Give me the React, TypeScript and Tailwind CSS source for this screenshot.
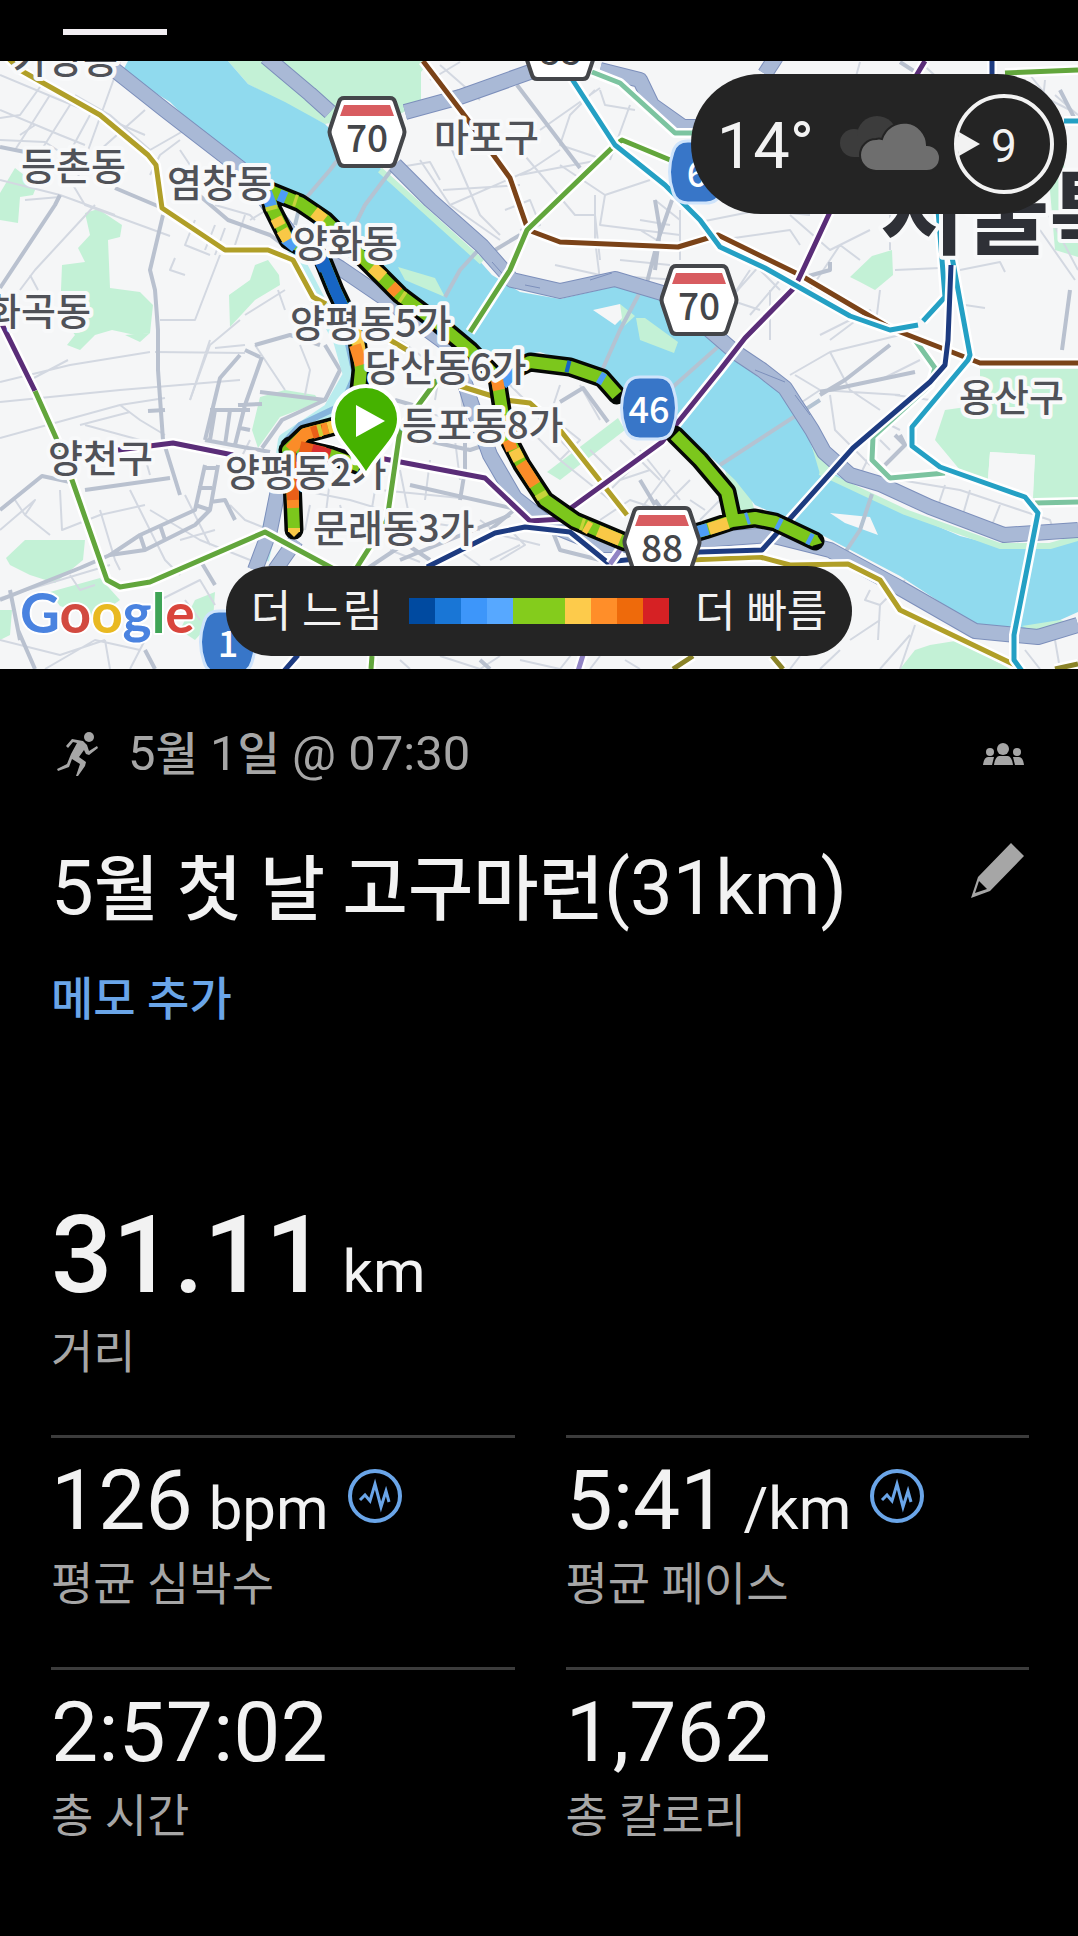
import * as React from "react";

interface MetricProps {
  value: string;
  unit?: string;
  label: string;
  hasChart?: boolean;
}

interface PlaceLabel {
  name: string;
  x: number;
  y: number;
}

interface Stroke {
  color: string;
  d: string;
}

const PLACES: PlaceLabel[] = [
  { name: "가양동", x: 13, y: 73 },
  { name: "등촌동", x: 21, y: 180 },
  { name: "염창동", x: 167, y: 197 },
  { name: "양화동", x: 293, y: 257 },
  { name: "양평동5가", x: 290, y: 337 },
  { name: "당산동6가", x: 365, y: 381 },
  { name: "등포동8가", x: 402, y: 439 },
  { name: "양평동2가", x: 225, y: 486 },
  { name: "문래동3가", x: 313, y: 542 },
  { name: "양천구", x: 48, y: 472 },
  { name: "화곡동", x: -14, y: 325 },
  { name: "마포구", x: 434, y: 151 },
  { name: "용산구", x: 959, y: 411 },
];

const PARKS = [
  "M228 61H430L421 72V103L400 114L380 118L335 122L325 124L285 104L248 84Z",
  "M85 213L98 209L122 225L120 237L108 240L110 288L140 292L153 305L150 333L135 335L112 330L95 335L80 350L67 345L75 335L60 315L62 265L85 262L78 248L90 235Z",
  "M0 193L15 168L37 185L33 195L20 197L18 223L0 220Z",
  "M268 260L279 275L280 285L255 300L230 327L229 295L250 280L255 265Z",
  "M6 558L25 540L85 540L83 560L55 583L30 575L10 565Z",
  "M50 592L100 578L120 600L95 618L60 606Z",
  "M0 610L12 610L10 635L0 640Z",
  "M195 600L215 592L213 620L195 640L180 630Z",
  "M260 397L285 390L315 395L320 402L280 417L258 448L252 430Z",
  "M125 335L150 333L140 342Z",
  "M980 369H1078V498H1033L1035 455L990 452L988 480L960 470L935 440L945 410L980 405Z",
  "M915 650L930 645L955 641L985 655L1010 669H900Z",
  "M850 277L872 256L892 250L893 275L875 290L860 282Z",
  "M1050 190L1063 155L1068 200L1078 232V257L1055 250Z",
  "M547 472L618 418L625 430L560 480Z",
  "M725 470L745 475L755 512L735 515Z",
];

const ISLANDS = [
  "M636 318L645 318L678 342L674 353L640 340Z",
  "M398 267L435 278L445 297L405 280Z",
  "M620 304L635 316L624 326L618 316Z",
  "M810 440L822 456L836 478L820 474Z",
  "M1022 626L1060 620L1078 624L1040 634Z",
];

const EXPRESSWAYS = [
  "M112 68L165 110L240 168L262 196L298 244L340 268L390 302L455 350L470 400L490 455L515 498L548 524L600 545L640 545L700 540L770 535L830 550L900 588L975 631L1038 637L1078 625",
  "M266 57L310 94L330 112M395 165L430 200L482 246L512 280L560 291L615 279L662 293L692 315L735 352L762 370L785 388L812 430L824 452L850 475L880 484L930 507L1004 535L1078 530",
  "M405 112L460 97L530 72M600 70L640 80L652 105L683 127L700 127",
  "M765 74L776 57",
  "M278 490L270 530L255 570M296 540L275 570",
];

const THIN_ROADS = [
  "M0 75L60 100L110 120L145 135M45 80L20 115L0 118M0 110L60 135L85 145M50 95L15 150M70 105L35 160M90 115L60 170M0 140L45 142L80 165",
  "M75 95L110 115L150 150L185 130M120 62L90 145L75 185M145 110L100 150M20 135L35 125M95 205L35 270L20 290M30 275L38 290M60 197L25 200",
  "M0 180L60 195L115 215M70 180L85 205L170 236M195 220L185 245L210 255M175 258L170 270L185 275M215 225L205 250M225 228L215 255M220 255L195 320L160 320M245 315L285 290M278 290L285 310M180 140L160 155L150 175",
  "M0 382L70 365L150 352M0 402L120 390L240 380M0 438L120 405L165 398M30 380L68 360M80 425L130 412M120 405L140 420L165 435M155 352L245 353M210 340L190 400",
  "M240 320L210 345L190 400M255 345L285 390M300 345L310 370L305 395M245 345L215 348M60 490L62 530L100 515L145 505M85 425L140 440L150 475",
  "M100 510L115 560L120 570M130 490L165 560L180 575M0 530L35 500L25 515L50 535M15 500L25 515M0 598L60 580L110 565M70 575L80 590L95 585M150 510L200 540L250 560M185 495L210 545",
  "M0 640L60 655L105 640M105 640L110 669M45 669L95 640L140 650M160 600L200 580L215 605M185 600L200 620M130 669L145 640M180 540L215 530M230 505L245 520L270 530",
  "M300 490L350 500L400 515M310 505L305 530M330 480L325 520M340 505L350 540M375 490L370 520M400 470L410 520L480 530M430 460L425 500M455 440L460 480M380 490L480 500",
  "M400 340L440 370L470 380M440 370L435 400M460 380L465 440M410 410L460 420M480 520L500 535L540 545M520 545L490 560M510 530L525 545L500 560M390 550L420 562M455 548L480 566",
  "M505 380L525 400L540 420M530 400L580 440L560 460M560 385L545 430M580 385L600 420M520 420L560 460L610 500M560 440L590 470M590 450L620 480L650 470M620 440L660 480M650 450L610 490M670 470L640 510M690 480L660 510M640 450L680 500M600 520L630 500L690 520",
  "M400 167L430 162L440 180M420 160L450 205L500 240M443 190L520 185M450 205L530 170L560 150M450 145L480 215L500 235M520 150L575 215L595 215M560 165L605 195L650 180M520 175L600 160M595 215L600 260M595 195V240L600 280M505 210L530 200L540 225L520 230M600 90L605 105L635 110M595 90L570 115L560 145L605 160M630 105L610 160M540 130L600 88",
  "M605 195L600 225L680 235M640 220L670 225M640 230L665 245M655 200L680 220M600 275L680 280M555 265L600 275M620 260L670 265M680 210V260M400 115L390 125M440 65L480 100M460 62L430 80",
  "M700 222L760 210L810 215M720 240L790 230L800 245M740 250L780 290M750 270L730 300L760 310M760 265L720 310M780 280L750 315M770 290L770 340M790 215L830 250L870 230M840 245L810 290M840 245L860 260M890 250V215M895 270L940 268M880 290L875 330M820 335L850 320M830 340L870 310L880 330",
  "M860 75L840 90M860 62L855 80M920 62L940 80L960 78M1030 75L1050 100L1070 110M1045 80L1040 130M960 270L1000 262L1005 272M965 305L985 308M945 320L950 270M1055 95L1078 115M1040 230L1075 280M1030 180L1078 270",
  "M790 375L830 352L900 335M795 375L820 390L900 395M830 352L850 390L880 410M830 395L835 430L870 465M820 390L790 410M880 380L920 360M895 395L930 400M880 420L900 430M870 430L860 440M860 475L870 455M890 450L880 440M900 480L960 490L1050 520L1055 535M920 495L915 505M945 485L935 515M970 490L960 525M1000 505L990 530",
  "M870 590L865 600L880 605L878 640M880 605L905 580M915 625L900 669M910 635L880 669M840 650L820 669M850 640L880 620M1055 640L1060 669M1025 650L1040 669M800 656L790 669M400 660L410 669M440 656L480 669L500 656M520 660L560 669L575 650M625 660L640 669M600 656L590 669",
  "M700 520L720 500M705 510L690 500M700 390L690 410M250 440L240 460L245 480",
  "M215 205L250 215L255 220M245 215L235 245M180 150L190 165M250 220L300 190",
];

const THICK_ROADS = [
  "M0 147L30 153M115 188L160 207M200 196L228 220L270 235L290 250M60 195L55 205L0 288M163 215L150 270L155 290L158 330V370L163 440L180 495",
  "M0 510L42 476L70 482M85 490L170 478M200 560L215 585M148 411L165 410M18 630L35 669M145 650L155 669M10 590L20 640",
  "M240 355L220 378L205 440M255 345L290 335L320 345M262 357L245 405L235 445M210 410H250M205 440L270 452M215 410L210 440M230 410L225 445M260 392L325 400M260 357L245 350M238 405L262 404M240 428L250 430M325 345L340 370L325 400L282 420L262 448",
  "M205 465L195 510L140 535L110 555L145 550L195 525L210 510L218 465M205 468H218M198 488H212M195 505L210 510M140 535L145 550M160 525L165 540M210 502L225 500L235 520",
  "M370 415L400 435L470 450L500 440M410 485L520 510M400 560L510 515M400 540L430 560M465 400V470L460 500M395 460L390 490M395 400L430 410M365 570L410 540",
  "M517 85L580 168M655 500L670 520M490 530L520 505M550 525L560 550L620 565M560 402L583 388L608 422M655 505L640 480",
  "M672 200L658 240L645 290M655 270L660 230L655 200M495 250L520 235M890 345L845 380L820 395M820 392L915 372M900 435L905 445L885 465M905 445L895 435M1070 290L1062 350M1060 90L1078 125M805 277L830 270V262M900 62L920 75",
  "M110 555L80 568L0 600M480 660L490 669",
];

const BRIDGES = [
  "M360 130L330 170L300 205L295 225",
  "M395 165L365 205L350 235",
  "M482 246L460 270L445 297",
  "M640 292L620 330L600 375",
  "M720 345L675 385L650 410M720 465L820 400",
  "M872 494L860 530L840 560L838 555",
];

const TRANSIT: Stroke[] = [
  { color: "#7cc4a0", d: "M592 72L620 83L675 133H695M915 340L935 368L930 385L873 437L872 460L890 478L945 473M1035 503L1078 502" },
  { color: "#b09f28", d: "M0 50L20 70L100 115L148 155L156 165L162 208L225 250H268L293 260L313 297L326 304M390 340L407 350M460 386L505 400L530 403L560 430L627 515M690 560L760 557L790 565L848 564L880 580L900 610L1015 665" },
  { color: "#8a8328", d: "M673 669L693 656M772 656L783 669M1055 669L1078 664" },
  { color: "#7b4318", d: "M423 61L468 120L510 178L528 230L560 242L678 247L718 235L800 275L890 328L980 363H1078" },
  { color: "#5a2d78", d: "M0 320L35 391M118 450L173 443L233 455M310 444L345 452L390 460L485 478L530 521L562 519L571 508L662 442L720 370L745 338L795 287L830 212M916 76L925 61" },
  { color: "#62a63c", d: "M35 391L57 440L72 480L107 580L120 587L150 582L265 532L345 575M352 575L387 520L400 430L437 380M470 332L510 270L527 230L615 145L622 140L675 162M371 669L372 656M1005 73L1078 70" },
  { color: "#24a0c4", d: "M570 76L615 145L665 185L700 220L720 247L765 268L850 316L890 330L918 325M923 321L945 297L938 210M952 257L970 355L968 360L912 427V446L940 467L1025 497L1038 513L1014 635V660L1022 671M1064 121H1078" },
  { color: "#1d3b80", d: "M992 61V76M951 265L948 340L945 365L930 382L853 448L762 550L700 552L607 562L570 532L525 527L495 533L467 547L427 567M284 671L298 655" },
  { color: "#9184c4", d: "M578 671L583 655M610 564L620 550" },
];

const ROUTE =
  "M268 190L300 203L325 220L350 245L380 275L400 295L440 325L470 350L497 378L502 410L510 442L522 465L545 500L575 521L625 542L665 542L705 530L732 521L755 518L775 522L815 541M497 378L530 362L570 367L602 378L617 395M675 435L700 460L727 492L733 520M268 190L272 208L288 240L322 258L335 290L347 315L357 340L361 370L358 400M335 426L305 434L288 450L292 480L294 530M290 446L330 455L360 466";

const PACE_SEGMENTS: Stroke[] = [
  { color: "#4d9df5", d: "M266 192L272 208M279 195L286 198M285 238L296 247M502 384L520 366M694 533L708 529M746 519L749 518M777 523L781 525M808 538L812 540M599 377L604 380" },
  { color: "#1765c4", d: "M322 258L335 290L345 312M566 366L570 367M318 257L325 270" },
  { color: "#f9c846", d: "M314 212L324 220M276 218L280 226M282 230L288 240M372 267L383 277M353 325L357 335L361 358M503 416L508 436M514 450L519 460M585 526L590 529M598 531L620 540M709 529L728 523M294 528L294 532M335 426L328 428" },
  { color: "#fb8c28", d: "M391 286L398 293M355 345L361 365M497 380L499 390M521 463L535 485M328 428L305 434L290 450M292 462L293 508M508 440L512 450" },
  { color: "#ea5f18", d: "M318 431L312 433M290 452L292 480L293 500M300 447L325 453M322 431L319 431" },
  { color: "#d83030", d: "M312 450L330 455" },
  { color: "#c7d33a", d: "M294 200L297 201M401 296L404 298M271 206L272 210M318 431L322 430M540 493L543 498M581 524L584 525" },
];

const PACE_COLORS = [
  "bg-[#004aa0]",
  "bg-[#1976d6]",
  "bg-[#3d96fa]",
  "bg-[#57a8ff]",
  "bg-[#84cc1c]",
  "bg-[#84cc1c]",
  "bg-[#fdcb4b]",
  "bg-[#ff8e29]",
  "bg-[#ee6a0b]",
  "bg-[#d62124]",
];

const HighwayShield: React.FC<{ x: number; y: number; text: string }> = ({ x, y, text }) => (
  <g transform={`translate(${x} ${y})`}>
    <path
      d="M-23 -34H23Q27 -34 28 -30L37 -3Q38 0 37 3L28 30Q27 34 23 34H-23Q-27 34 -28 30L-37 3Q-38 0 -37 -3L-28 -30Q-27 -34 -23 -34Z"
      fill="#fff"
      stroke="#44464a"
      strokeWidth="4"
    />
    <path d="M-23 -27H23L27 -16H-27Z" fill="#d85c60" />
    <text y="20" textAnchor="middle" fontSize="37" fontWeight="500" fill="#44464a">
      {text}
    </text>
  </g>
);

const RouteBadge: React.FC<{ x: number; y: number; text: string }> = ({ x, y, text }) => (
  <g transform={`translate(${x} ${y})`}>
    <path
      d="M-9 -31H9Q21 -31 24 -20Q31 0 24 20Q21 31 9 31H-9Q-21 31 -24 20Q-31 0 -24 -20Q-21 -31 -9 -31Z"
      fill="#3876c8"
      stroke="#cfe4fb"
      strokeWidth="3"
    />
    <text y="15" textAnchor="middle" fontSize="36" fontWeight="500" fill="#fff">
      {text}
    </text>
  </g>
);

const RouteMap: React.FC = () => (
  <svg
    viewBox="0 61 1078 608"
    className="block w-full font-['Noto_Sans_CJK_KR',sans-serif]"
    role="img"
    aria-label="Google"
    fill="none"
    strokeLinejoin="round"
  >
    <rect y="61" width="1078" height="608" fill="#f5f6f7" />
    {PARKS.map((d) => (
      <path key={d} d={d} fill="#c3f1d6" />
    ))}
    <path d="M990 452L1035 455L1033 492L1010 490L988 478Z" fill="#f5f6f7" />
    {THIN_ROADS.map((d) => (
      <path key={d} d={d} stroke="#d3d8e1" strokeWidth="2" />
    ))}
    {THICK_ROADS.map((d) => (
      <path key={d} d={d} stroke="#b9c1cf" strokeWidth="4" />
    ))}

    {/* Han river and its side stream */}
    <path
      d="M128 61H228L248 84L285 102L325 124L350 150L380 168L470 250L492 275L520 292L560 299L617 286L660 300L690 322L735 360L757 376L783 395L806 432L818 462L850 484L900 510L960 536L1004 547L1045 547L1078 540V612L1040 629L975 625L900 576L820 534L755 505L735 480L680 428L617 388L590 370L540 352L505 358L480 350L400 286L330 225L270 183L220 152L170 102L122 72Z"
      fill="#90daee"
    />
    <path d="M380 170L482 262M820 472L905 512L1000 546L1050 546L1078 538" stroke="#c3f1d6" strokeWidth="6" />
    <path d="M292 250L318 300L340 340L350 375L330 410L285 440L278 490L262 560" stroke="#b9ecee" strokeWidth="14" />
    <path d="M346 335L355 375L342 405L300 425L282 445" stroke="#85b4dc" strokeWidth="6" />
    {ISLANDS.map((d) => (
      <path key={d} d={d} fill="#c3f1d6" />
    ))}
    <path d="M593 310L620 304L622 318L615 325ZM830 513L870 517L878 535L845 523Z" fill="#f5f6f7" />
    {BRIDGES.map((d) => (
      <path key={d} d={d} stroke="#b4c3d2" strokeWidth="4" />
    ))}
    {EXPRESSWAYS.map((d) => (
      <React.Fragment key={d}>
        <path d={d} stroke="#7c8fbb" strokeWidth="16" />
        <path d={d} stroke="#a9b9d6" strokeWidth="14" />
      </React.Fragment>
    ))}
    <path d="M590 280L612 273M492 262L508 280M755 370L785 382M795 395L810 415M540 288L525 285" stroke="#7c8fbb" strokeWidth="1" />

    {TRANSIT.map(({ color, d }) => (
      <React.Fragment key={d}>
        <path d={d} stroke="#fff" strokeWidth="10" />
        <path d={d} stroke={color} strokeWidth="5" />
      </React.Fragment>
    ))}

    {/* activity track, coloured by pace */}
    <path d={ROUTE} stroke="#050805" strokeWidth="19" strokeLinecap="round" />
    <path d={ROUTE} stroke="#7cc71c" strokeWidth="12" />
    {PACE_SEGMENTS.map(({ color, d }) => (
      <path key={color} d={d} stroke={color} strokeWidth="12" />
    ))}
    <path d="M288 531H300L294 537Z" fill="#f9c846" />
    <path d="M812 546L817 535L822 543Z" fill="#7cc71c" />

    <HighwayShield x={367} y={132} text="70" />
    <HighwayShield x={699} y={300} text="70" />
    <HighwayShield x={662} y={542} text="88" />
    <HighwayShield x={560} y={45} text="88" />
    <RouteBadge x={649} y={408} text="46" />
    <RouteBadge x={697} y={172} text="6" />
    <RouteBadge x={228} y={642} text="1" />

    <g fill="#505258" stroke="#f8f9fa" strokeWidth="8" paintOrder="stroke" fontSize="38" fontWeight="500">
      {PLACES.map(({ name, x, y }) => (
        <text key={name} x={x} y={y}>
          {name}
        </text>
      ))}
      <text x="880" y="247" fontSize="92" fontWeight="700" fill="#2e3036">
        서울특별시
      </text>
    </g>

    <path
      d="M366 475C352 450 333 440 333 419A33 33 0 0 1 399 419C399 440 380 450 366 475Z"
      fill="#45b200"
      stroke="#fff"
      strokeWidth="4"
    />
    <path d="M356 405V437L385 421Z" fill="#fff" />

    <text
      x="20"
      y="633"
      fontSize="55"
      fontWeight="700"
      stroke="#fff"
      strokeWidth="4"
      paintOrder="stroke"
      className="font-['Lato',sans-serif]"
    >
      <tspan fill="#4a83e0">G</tspan>
      <tspan fill="#d24a40">o</tspan>
      <tspan fill="#e9b921">o</tspan>
      <tspan fill="#4a83e0">g</tspan>
      <tspan fill="#3fa456">l</tspan>
      <tspan fill="#d9453c">e</tspan>
    </text>
  </svg>
);

const WeatherChip: React.FC = () => (
  <div className="absolute top-[13px] right-[11px] flex h-[140px] items-center rounded-full bg-[#242424] pr-[13px] pl-[26px] text-[#f2f2f2]">
    <span className="pt-[4px] text-[65px] leading-none">14°</span>
    <svg viewBox="0 0 100 56" className="mr-[14px] ml-[26px] h-[56px] w-[100px]" aria-hidden="true">
      <g fill="#3c3c3c">
        <circle cx="14" cy="27" r="14" />
        <circle cx="37" cy="20" r="20" />
        <path d="M14 41H40V20H14Z" />
      </g>
      <path
        d="M36 55A16 16 0 0 1 36 23Q39 22 42 23A23 23 0 0 1 87 29A13 13 0 0 1 87 55Z"
        fill="#6e6e6e"
        stroke="#242424"
        strokeWidth="2"
      />
    </svg>
    <div className="relative flex size-[100px] items-center justify-center rounded-full border-4 border-[#f2f2f2] pt-[4px] text-[46px] leading-none">
      <svg viewBox="0 0 24 24" className="absolute top-[34px] -left-px h-[24px] w-[24px]" aria-hidden="true">
        <path d="M2 0L23 12L2 24Q-1 12 2 0Z" fill="#f2f2f2" />
      </svg>
      9
    </div>
  </div>
);

const PaceLegend: React.FC = () => (
  <div className="absolute inset-x-0 bottom-[13px] flex justify-center">
    <div className="flex h-[90px] items-center gap-[26px] rounded-full bg-[#242424] px-[25px] text-[44px] leading-none text-[#f2f2f2]">
      <span className="pt-[2px]">더 느림</span>
      <div className="flex">
        {PACE_COLORS.map((color, index) => (
          <span key={index} className={`size-[26px] ${color}`} />
        ))}
      </div>
      <span className="pt-[2px]">더 빠름</span>
    </div>
  </div>
);

const RunnerIcon: React.FC = () => (
  <svg viewBox="0 0 41 44" className="h-[44px] w-[41px]" fill="#a6a6a6" aria-hidden="true">
    <circle cx="32" cy="5" r="5" />
    <path d="M15 7L26 9L30 13L32 19L40 14L41 16L32 23L29 22L27 18L22 25L29 30L28 34L21 44H19L23 32L15 27L12 35L1 39L0 37L10 32L14 22L20 11L16 10L11 16L9 14Z" />
  </svg>
);

const GroupIcon: React.FC = () => (
  <svg viewBox="0 0 41 22" className="h-[22px] w-[41px]" fill="#a6a6a6" aria-hidden="true">
    <circle cx="20" cy="6" r="6" />
    <circle cx="7" cy="9" r="4" />
    <circle cx="34" cy="9" r="4" />
    <path d="M11 22Q12 14 16 13H25Q29 14 30 22ZM0 22Q1 14 5 14H11L9 22ZM41 22Q40 14 36 14H30L32 22Z" />
  </svg>
);

const PencilIcon: React.FC = () => (
  <svg viewBox="0 0 53 55" className="h-[55px] w-[53px]" aria-hidden="true">
    <path
      fillRule="evenodd"
      d="M40 0L53 13L19 48L0 55L7 34ZM8 38L4 50L16 46Z"
      fill="#a6a6a6"
    />
  </svg>
);

const PulseIcon: React.FC = () => (
  <svg viewBox="0 0 54 54" className="size-[54px]" fill="none" stroke="#6aa5e8" aria-hidden="true">
    <circle cx="27" cy="27" r="25" strokeWidth="4" />
    <path d="M12 31L17 26L22 32L27 15L33 38L38 22L41 33" strokeWidth="3" />
  </svg>
);

const Metric: React.FC<MetricProps> = ({ value, unit, label, hasChart }) => (
  <div className="h-[232px] border-t-[3px] border-[#3c3c3c] pt-[15px]">
    <div className="flex h-[101px] items-baseline gap-[16px] text-[84px] leading-[96px]">
      <span>{value}</span>
      {unit && <span className="text-[60px]">{unit}</span>}
      {hasChart && (
        <button type="button" className="mt-[16px] ml-[3px] self-start" aria-label={label}>
          <PulseIcon />
        </button>
      )}
    </div>
    <p className="text-[46px] leading-[60px] text-[#a6a6a6]">{label}</p>
  </div>
);

const App: React.FC = () => {
  return (
    <div className="min-h-screen bg-black font-['Roboto','Noto_Sans_CJK_KR',sans-serif] text-[#f2f2f2]">
      <div className="h-[61px] px-[63px] pt-[29px]">
        <div className="h-[6px] w-[104px] bg-[#f2eef2]" />
      </div>

      <section className="relative overflow-hidden">
        <RouteMap />
        <WeatherChip />
        <PaceLegend />
      </section>

      <main className="pr-[49px] pl-[51px]">
        <div className="flex items-center pt-[55px] pr-[5px] pl-[6px] text-[#a6a6a6]">
          <RunnerIcon />
          <p className="ml-[30px] grow text-[49px] leading-[60px]">
            5<span className="text-[46px] font-medium">월</span> 1
            <span className="text-[46px] font-medium">일</span> @ 07:30
          </p>
          <GroupIcon />
        </div>

        <div className="flex items-start justify-between pt-[59px] pr-[5px]">
          <h1 className="text-[76px] leading-[90px]">
            5<span className="text-[71px] font-medium">월 첫 날 고구마런</span>(31km)
          </h1>
          <button type="button" aria-label="편집">
            <PencilIcon />
          </button>
        </div>
        <button
          type="button"
          className="mt-[34px] block text-[46px] leading-[60px] font-medium text-[#6aa5e8]"
        >
          메모 추가
        </button>

        <div className="pt-[176px]">
          <div className="flex items-baseline gap-[16px] text-[108px] leading-[100px]">
            <span className="font-medium">31.11</span>
            <span className="text-[60px]">km</span>
          </div>
          <p className="text-[46px] leading-[60px] text-[#a6a6a6]">거리</p>
        </div>

        <div className="grid grid-cols-2 gap-x-[51px] pt-[53px]">
          <Metric value="126" unit="bpm" label="평균 심박수" hasChart />
          <Metric value="5:41" unit="/km" label="평균 페이스" hasChart />
          <Metric value="2:57:02" label="총 시간" />
          <Metric value="1,762" label="총 칼로리" />
        </div>
      </main>
    </div>
  );
};

export default App;
